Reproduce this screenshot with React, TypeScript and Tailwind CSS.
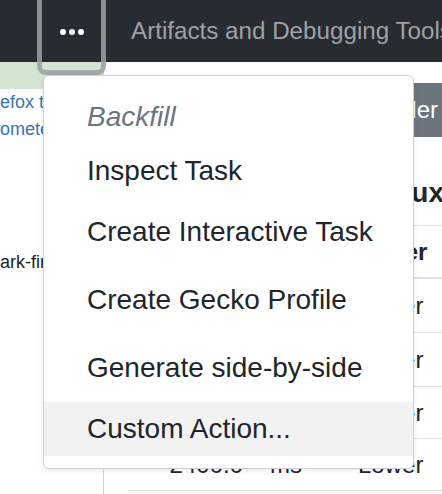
import React from "react";

const menuItems = [
  { label: "Inspect Task", mt: "mt-0" },
  { label: "Create Interactive Task", mt: "mt-[7px]" },
  { label: "Create Gecko Profile", mt: "mt-[14px]" },
  { label: "Generate side-by-side", mt: "mt-[14px]" },
];

const rows = [
  { value: "2391.4", unit: "ms", better: "Lower" },
  { value: "2412.7", unit: "ms", better: "Lower" },
  { value: "2388.9", unit: "ms", better: "Lower" },
  { value: "2400.0", unit: "ms", better: "Lower" },
];

function ActionMenu() {
  return (
    <div className="absolute left-[43px] top-[75px] z-20 flex h-[394px] w-[371px] flex-col rounded-[6px] border border-[#cfd2d5] bg-white pt-[14px] shadow-[0_2px_6px_rgba(0,0,0,0.08)]">
      <div className="flex h-[54px] items-center pl-[43px] text-[28px] italic text-[#6c757d]">
        Backfill
      </div>
      {menuItems.map((item) => (
        <div
          key={item.label}
          className={`flex h-[54px] items-center pl-[43px] text-[28px] text-[#212529] ${item.mt}`}
        >
          {item.label}
        </div>
      ))}
      <div className="mt-[7px] flex h-[54px] items-center bg-[#f2f2f2] pl-[43px] text-[28px] text-[#212529]">
        Custom Action...
      </div>
    </div>
  );
}

export default function App() {
  return (
    <div
      className="relative h-[494px] w-[442px] overflow-hidden bg-white"
      style={{ fontFamily: '"Liberation Sans", Arial, sans-serif' }}
    >
      {/* top navbar */}
      <div className="flex h-[62px] items-start bg-[#272b32]">
        <div className="relative z-10 ml-[42px] mt-[-10px] flex h-[80px] w-[59px] shrink-0 justify-center gap-[3px] rounded-[4px] pt-[39px] shadow-[0_0_0_5px_rgba(155,160,162,0.87)]">
          <span className="h-[6px] w-[6px] rounded-full bg-white" />
          <span className="h-[6px] w-[6px] rounded-full bg-white" />
          <span className="h-[6px] w-[6px] rounded-full bg-white" />
        </div>
        <div className="ml-[30px] self-center whitespace-nowrap text-[24.2px] text-[#9ea2a6]">
          Artifacts and Debugging Tools
        </div>
      </div>

      <div className="flex h-[432px]">
        {/* left job list */}
        <div className="w-[104px] shrink-0 overflow-hidden border-r border-[#d2d2d2]">
          <div className="h-[27px] w-[105px] bg-[#d3e5d2]" />
          <div className="whitespace-nowrap text-[18px] leading-[27px] text-[#3a72b6]">
            <div>efox tests</div>
            <div>ometer 3</div>
          </div>
          <div className="mt-[106px] whitespace-nowrap text-[18px] leading-[27px] text-[#222]">
            ark-firefox
          </div>
        </div>

        {/* right details panel */}
        <div className="min-w-0 flex-1 overflow-hidden pl-[24px]">
          <div className="mt-[21px] flex justify-end">
            <div className="flex h-[54px] items-center whitespace-nowrap bg-[#6c757d] pl-[16px] pr-[4px] text-[24px] text-white">
              Open in Firefox Profiler
            </div>
          </div>
          <div className="mt-[40px] flex justify-end whitespace-nowrap text-[28px] font-bold leading-[32px] text-[#212529]">
            <span className="-mr-[2px]">talos on linux</span>
          </div>
          <div className="mt-[16px] w-[314px] text-[24px] text-[#212529]">
            <div className="flex h-[54px] items-center border-y border-b-2 border-t-[#dee2e6] border-b-[#dee2e6] font-bold">
              <div className="w-[115px] text-right">Value</div>
              <div className="w-[115px] pl-[27px]">Unit</div>
              <div>Better</div>
            </div>
            {rows.map((r, i) => (
              <div
                key={i}
                className={`flex items-center border-b border-[#dee2e6] ${i < 2 ? "h-[54px]" : "h-[52px]"}`}
              >
                <div className="w-[115px] text-right">{r.value}</div>
                <div className="w-[115px] pl-[27px]">{r.unit}</div>
                <div>{r.better}</div>
              </div>
            ))}
          </div>
        </div>
      </div>

      <ActionMenu />
    </div>
  );
}
